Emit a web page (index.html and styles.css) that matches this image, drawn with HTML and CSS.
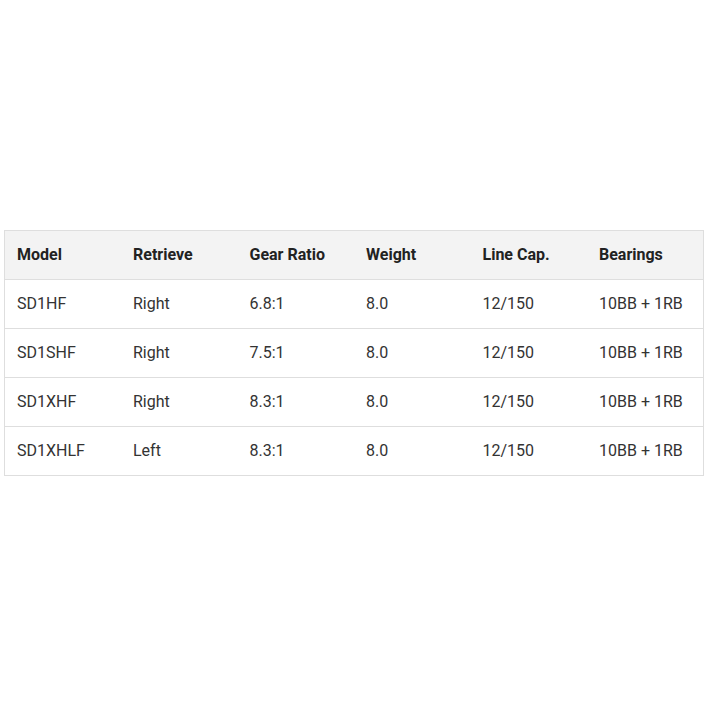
FILE: index.html
```html
<!DOCTYPE html>
<html>
<head>
<meta charset="utf-8">
<link rel="stylesheet" href="styles.css">
</head>
<body>
<main class="wrap">
<table class="specs">
<thead>
<tr><th>Model</th><th>Retrieve</th><th>Gear Ratio</th><th>Weight</th><th>Line Cap.</th><th>Bearings</th></tr>
</thead>
<tbody>
<tr><td>SD1HF</td><td>Right</td><td>6.8:1</td><td>8.0</td><td>12/150</td><td>10BB + 1RB</td></tr>
<tr><td>SD1SHF</td><td>Right</td><td>7.5:1</td><td>8.0</td><td>12/150</td><td>10BB + 1RB</td></tr>
<tr><td>SD1XHF</td><td>Right</td><td>8.3:1</td><td>8.0</td><td>12/150</td><td>10BB + 1RB</td></tr>
<tr><td>SD1XHLF</td><td>Left</td><td>8.3:1</td><td>8.0</td><td>12/150</td><td>10BB + 1RB</td></tr>
</tbody>
</table>
</main>
</body>
</html>
```
FILE: styles.css
```css
html, body {
  margin: 0;
  padding: 0;
  background: #fff;
}
.wrap {
  height: 706px;
  display: flex;
  align-items: center;
  justify-content: flex-start;
  padding-left: 4px;
  box-sizing: border-box;
}
.specs {
  width: 700px;
  border-collapse: collapse;
  table-layout: fixed;
  font-family: Roboto, "Liberation Sans", sans-serif;
  font-size: 16px;
  color: #333;
}
.specs th, .specs td {
  border: 1px solid #dedede;
  padding: 15px 12px;
  line-height: 18px;
  text-align: left;
  border-left: none;
  border-right: none;
}
.specs tr th:first-child, .specs tr td:first-child { border-left: 1px solid #dedede; }
.specs tr th:last-child, .specs tr td:last-child { border-right: 1px solid #dedede; }
.specs th {
  background: #f3f3f3;
  font-weight: 700;
  color: #222;
}
```
